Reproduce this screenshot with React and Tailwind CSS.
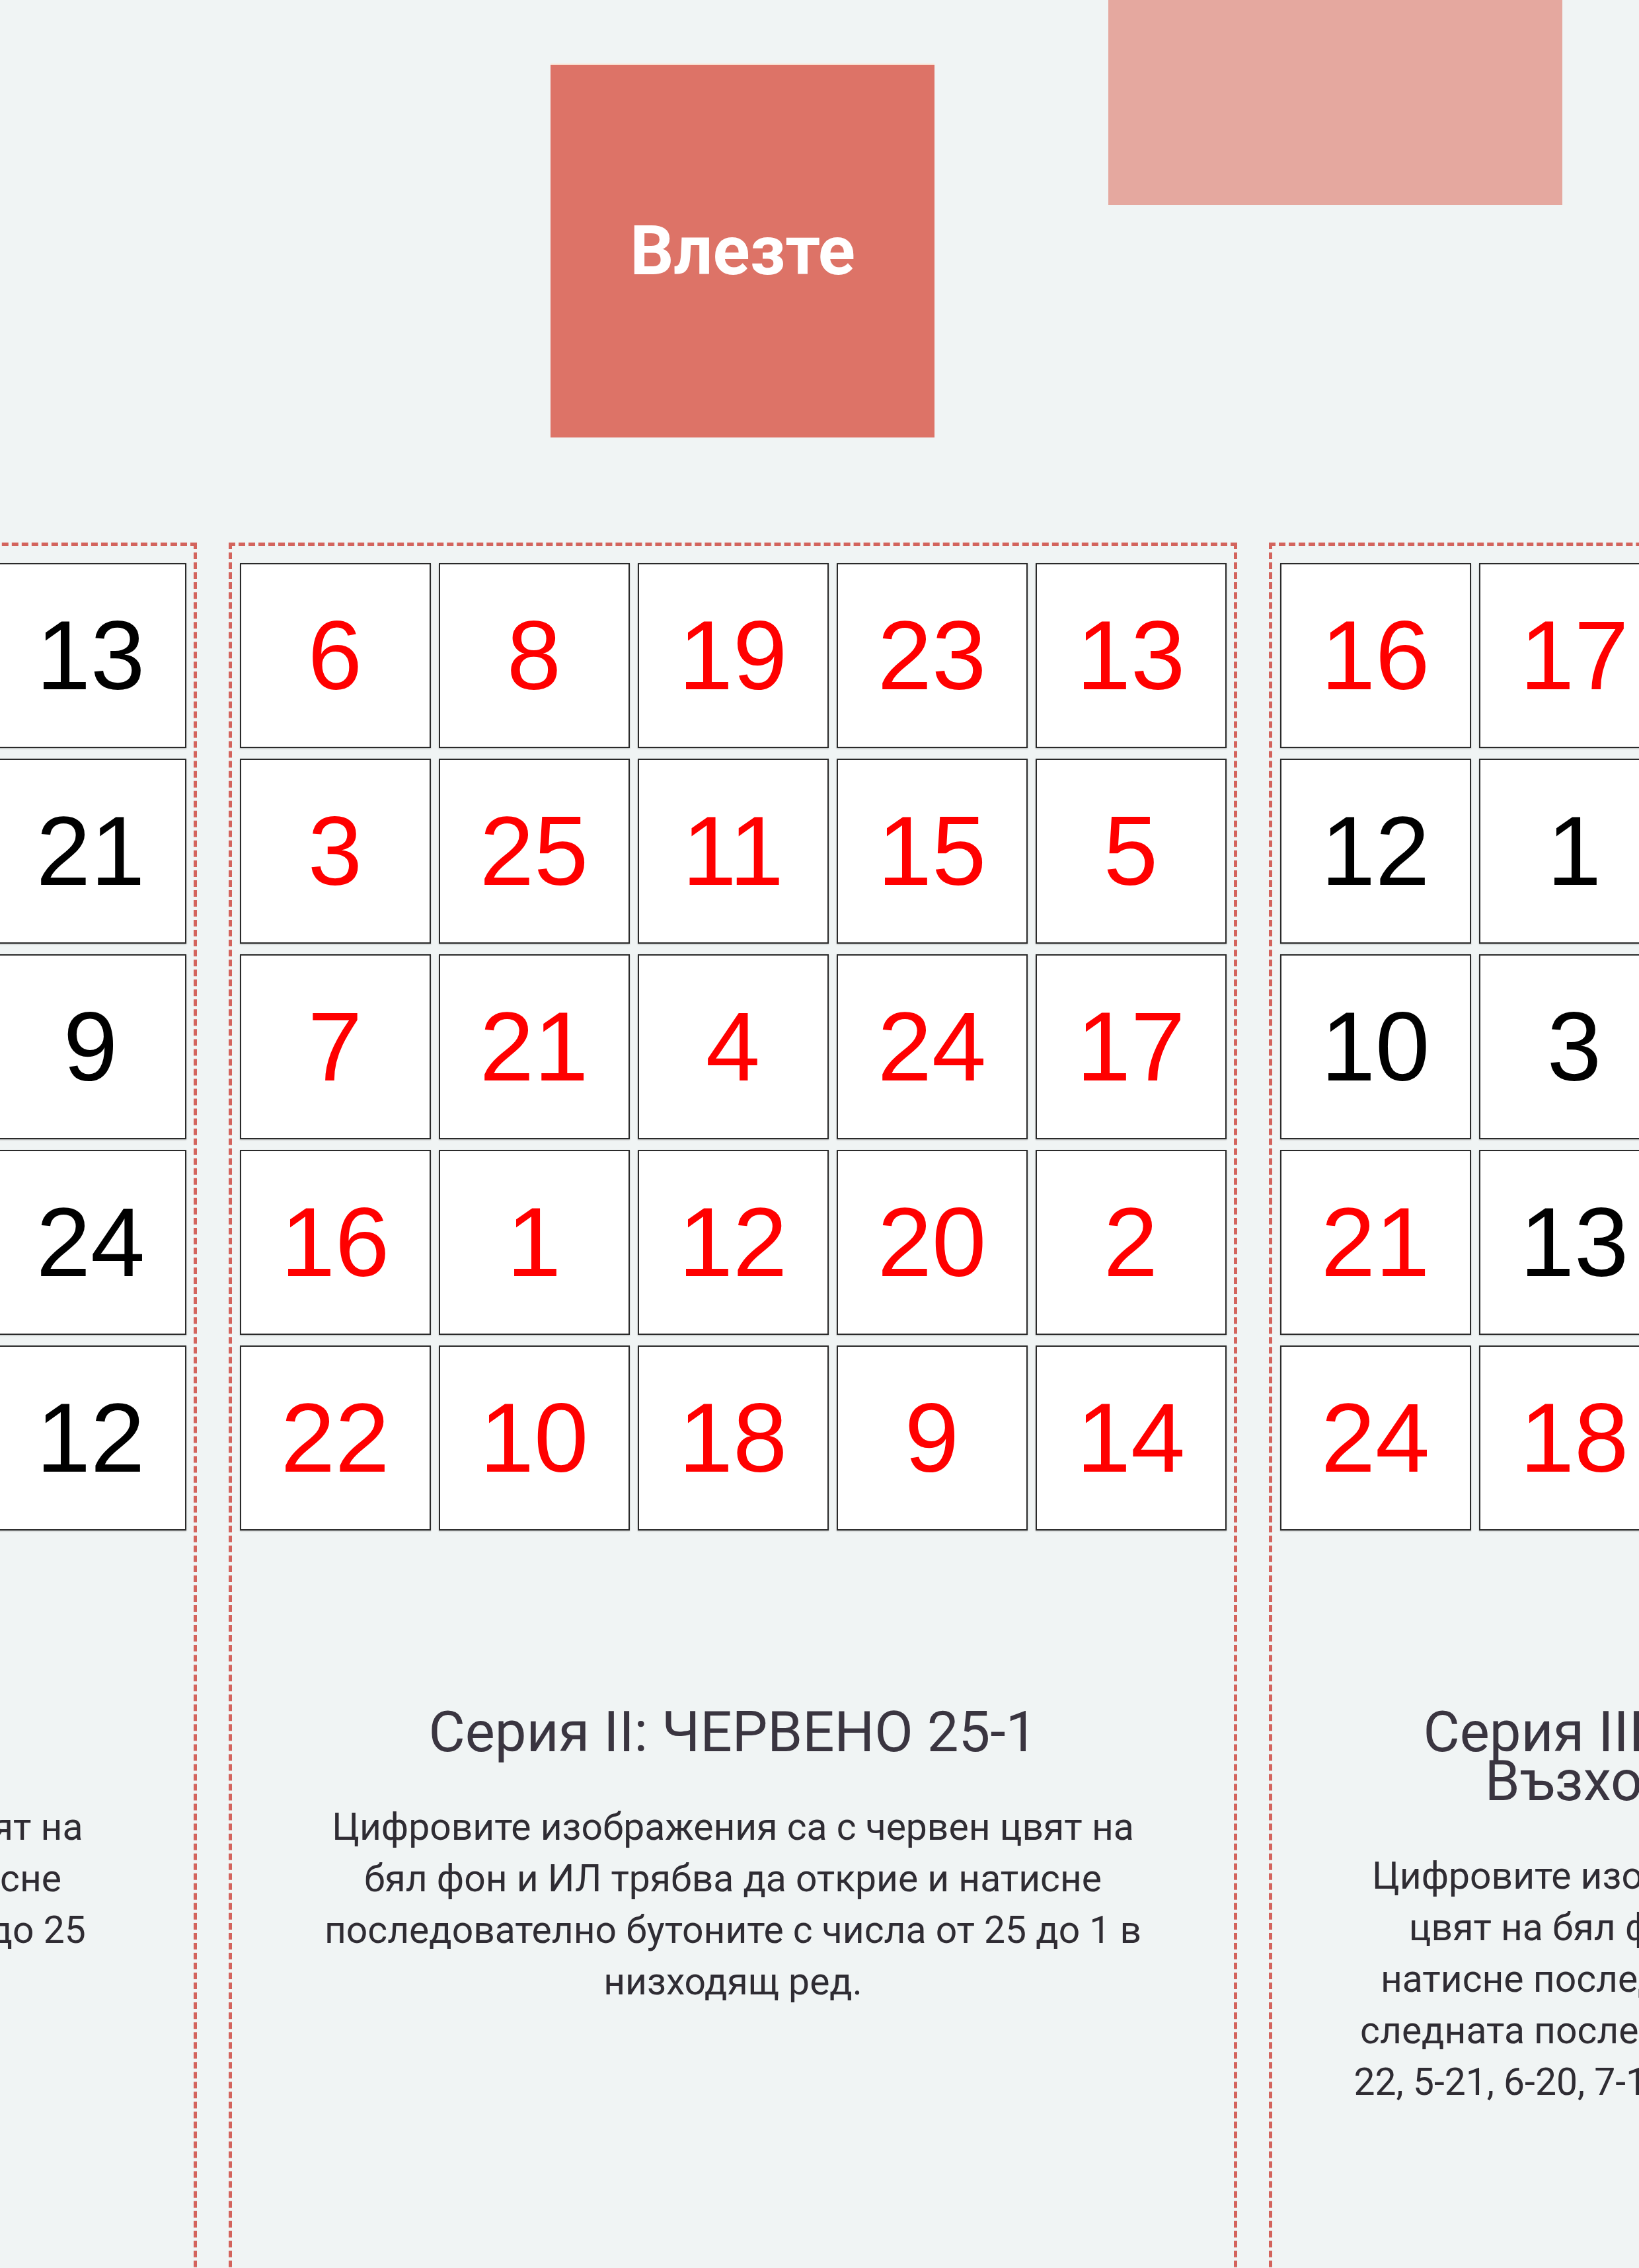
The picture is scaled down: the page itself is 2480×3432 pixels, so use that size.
const series = [
  {
    title: "Серия I: ЧЕРНО 1-25",
    text: "Цифровите изображения са с черен цвят на бял фон и ИЛ трябва да открие и натисне последователно бутоните с числа от 1 до 25 във възходящ ред.",
    cells: [5, 18, 2, 7, 13, 11, 3, 16, 1, 21, 22, 14, 6, 19, 9, 4, 20, 25, 10, 24, 17, 8, 15, 23, 12],
    red: () => false,
  },
  {
    title: "Серия II: ЧЕРВЕНО 25-1",
    text: "Цифровите изображения са с червен цвят на бял фон и ИЛ трябва да открие и натисне последователно бутоните с числа от 25 до 1 в низходящ ред.",
    cells: [6, 8, 19, 23, 13, 3, 25, 11, 15, 5, 7, 21, 4, 24, 17, 16, 1, 12, 20, 2, 22, 10, 18, 9, 14],
    red: () => true,
  },
  {
    title: "Серия III: ЧЕРНО-ЧЕРВЕНО Възходящо-низходящ",
    text: "Цифровите изображения са с черен и червен цвят на бял фон и ИЛ трябва да открие и натисне последователно бутоните с числа в следната последователност: 1-25, 2-24, 3-23, 4-22, 5-21, 6-20, 7-19, 8-18, 9-17, 10-16, 11-15, 12-14, 13.",
    cells: [16, 17, 5, 22, 8, 12, 1, 20, 6, 14, 10, 3, 25, 11, 19, 21, 13, 2, 15, 7, 24, 18, 9, 23, 4],
    red: (n) => n > 13,
  },
];

function Tile({ n, red }) {
  return (
    <div
      className={
        "flex h-[280px] items-center justify-center border-2 border-[#2a2a2a] bg-white font-['Liberation_Sans',Arial,sans-serif] text-[148px] leading-none shadow-[0_1px_2px_rgba(0,0,0,0.25)] " +
        (red ? "text-[#ff0000]" : "text-black")
      }
    >
      {n}
    </div>
  );
}

function SeriesCard({ item }) {
  return (
    <section className="h-[2700px] w-[1526px] shrink-0 border-[5px] border-dashed border-[#d3645d] pt-[26px]">
      <div className="grid grid-cols-[repeat(5,289px)] justify-center gap-x-[12px] gap-y-[16px]">
        {item.cells.map((n) => (
          <Tile key={n} n={n} red={item.red(n)} />
        ))}
      </div>
      <div className="mt-[268px] px-[122px] text-center">
        <h2 className="text-[85px] font-normal leading-[74px] text-[#3a3540]">
          {item.title}
        </h2>
        <p className="mt-[68px] text-[57px] leading-[78px] text-[#2f2c33]">
          {item.text}
        </p>
      </div>
    </section>
  );
}

export default function App() {
  return (
    <div className="h-[3432px] w-[2480px] overflow-hidden bg-[#f0f4f4] font-['Roboto','Noto_Sans',sans-serif]">
      <header className="flex h-[821px] items-start">
        <button
          type="button"
          className="ml-[833px] mt-[98px] h-[564px] w-[581px] bg-[#dd7367] text-[104px] font-bold text-white shadow-[0_-2px_0_#fbe9dc]"
        >
          Влезте
        </button>
        <div className="ml-[263px] h-[310px] w-[687px] bg-[#e5a89f]" />
      </header>

      <div className="-ml-[1228px] flex gap-[48px]">
        {series.map((item) => (
          <SeriesCard key={item.title} item={item} />
        ))}
      </div>
    </div>
  );
}
